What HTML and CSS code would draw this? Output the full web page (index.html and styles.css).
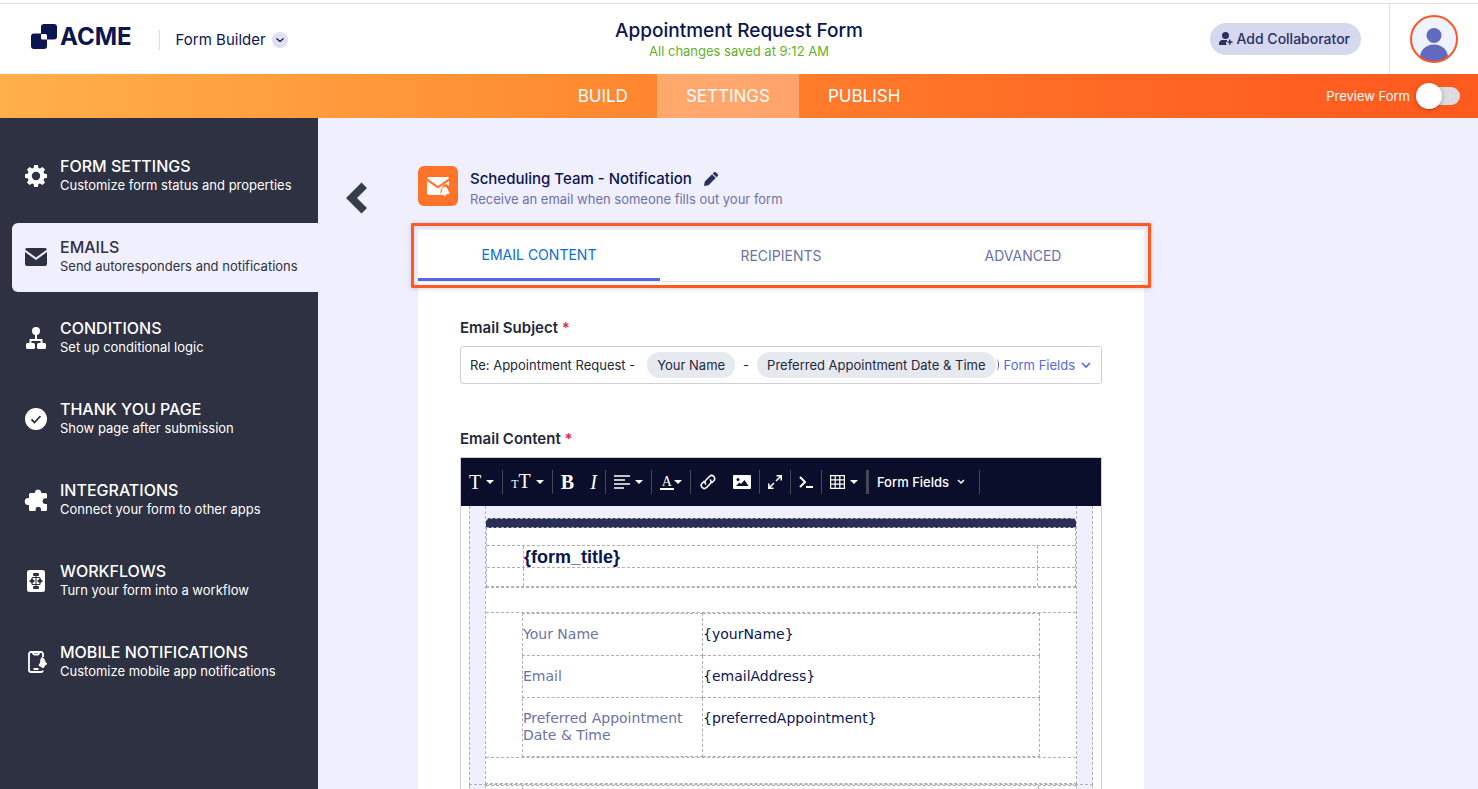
FILE: index.html
```html
<!DOCTYPE html>
<html lang="en">
<head>
    <meta charset="UTF-8">
    <meta name="viewport" content="width=device-width, initial-scale=1.0">
    <title>Appointment Request Form</title>
    <link rel="stylesheet" href="styles.css">
</head>
<body>
    <header class="top-bar">
        <div class="brand">
            <a href="#" class="logo">
                <svg width="26" height="26" viewBox="0 0 26 26"><path fill="#0a1551" d="M13 0h10a3 3 0 0 1 3 3v9.500a3 3 0 0 1-3 3h-7V11.500a1.500 1.500 0 0 0-1.500-1.500H10V3a3 3 0 0 1 3-3zM3 9.500h7V14a1.500 1.500 0 0 0 1.500 1.500H16V22a3 3 0 0 1-3 3H3a3 3 0 0 1-3-3v-9.500a3 3 0 0 1 3-3z"/></svg>
                <span>ACME</span>
            </a>
            <button class="product-button">
                Form Builder
                <svg width="16" height="16" viewBox="0 0 16 16"><circle cx="8" cy="8" r="8" fill="#e0e0f3"/><path d="M4.500 6.500L8 9.500l3.500-3" fill="none" stroke="#0a1551" stroke-width="1.300"/></svg>
            </button>
        </div>
        <div class="form-title">
            <h1>Appointment Request Form</h1>
            <p>All changes saved at 9:12 AM</p>
        </div>
        <div class="account">
            <button class="collaborator-button">
                <svg width="14" height="14" viewBox="0 0 14 14" fill="#2b3063"><circle cx="6.500" cy="3.500" r="3.500"/><path d="M0 13v-1.500C0 9.500 1.500 8 3.500 8H8v2H7v2.500h1V13zM10 7.500h1.500v1.800h2v1.500h-2v1.900H10v-1.900H8.500V9.300H10z"/></svg>
                Add Collaborator
            </button>
            <a href="#" class="profile" aria-label="Account">
                <svg width="48" height="48" viewBox="0 0 48 48"><defs><clipPath id="avatar"><circle cx="24" cy="24" r="23"/></clipPath></defs><circle cx="24" cy="24" r="23" fill="#edf3ff"/><g clip-path="url(#avatar)" fill="#6169c1"><circle cx="24" cy="20.500" r="7.500"/><path d="M10 48v-5c0-8 6-13.500 14-13.500S38 35 38 43v5z"/></g><circle cx="24" cy="24" r="23" fill="none" stroke="#ff5722" stroke-width="2"/></svg>
            </a>
        </div>
    </header>

    <nav class="main-nav">
        <div class="nav-links">
            <a href="#">BUILD</a>
            <a href="#" class="active">SETTINGS</a>
            <a href="#">PUBLISH</a>
        </div>
        <label class="preview">
            Preview Form
            <input type="checkbox" class="switch">
        </label>
    </nav>

    <div class="layout">
        <aside class="sidebar">
            <a href="#" class="menu-item">
                <svg width="24" height="24" viewBox="0 0 24 24"><path fill="currentColor" fill-rule="evenodd" d="M10.200 1h3.600l.6 2.900 1.500.6L18.400 3l2.600 2.600-1.500 2.500.6 1.500 2.900.6v3.600l-2.900.6-.6 1.500 1.500 2.500-2.600 2.600-2.500-1.500-1.500.6-.6 2.900h-3.600l-.6-2.900-1.500-.6L5.600 21 3 18.400l1.500-2.500-.6-1.500-2.900-.6v-3.600l2.900-.6.6-1.500L3 5.600 5.600 3l2.500 1.500 1.500-.6zM12 7.800a4.200 4.200 0 1 0 0 8.400 4.200 4.200 0 0 0 0-8.400z"/></svg>
                <span><strong>FORM SETTINGS</strong><small>Customize form status and properties</small></span>
            </a>
            <a href="#" class="menu-item active">
                <svg width="24" height="24" viewBox="0 0 24 24" fill="currentColor"><path d="M3 3h18a2 2 0 0 1 2 1.500L12 12.500 1 4.500A2 2 0 0 1 3 3z"/><path d="M1 7l11 8 11-8v12a2 2 0 0 1-2 2H3a2 2 0 0 1-2-2z"/></svg>
                <span><strong>EMAILS</strong><small>Send autoresponders and notifications</small></span>
            </a>
            <a href="#" class="menu-item">
                <svg width="24" height="24" viewBox="0 0 24 24"><circle cx="12" cy="5" r="4" fill="currentColor"/><path d="M12 7v7M6.500 18v-4h11v4" fill="none" stroke="currentColor" stroke-width="2"/><rect x="2" y="17" width="9" height="6" rx="1.500" fill="currentColor"/><rect x="13" y="17" width="9" height="6" rx="1.500" fill="currentColor"/></svg>
                <span><strong>CONDITIONS</strong><small>Set up conditional logic</small></span>
            </a>
            <a href="#" class="menu-item">
                <svg width="24" height="24" viewBox="0 0 24 24"><circle cx="12" cy="12" r="11" fill="currentColor"/><path d="M7.500 12.500l3 3 6-6.500" fill="none" stroke="#2e3141" stroke-width="1.800"/></svg>
                <span><strong>THANK YOU PAGE</strong><small>Show page after submission</small></span>
            </a>
            <a href="#" class="menu-item">
                <svg width="24" height="24" viewBox="0 0 24 24"><path fill="currentColor" d="M5 6.500A1.500 1.500 0 0 1 6.500 5h4.200V4.200a3.400 3.400 0 0 1 6.600 0V5h4.200A1.500 1.500 0 0 1 23 6.500v3.700h-1.500a2.900 2.900 0 0 0 0 5.800H23v5.500a1.500 1.500 0 0 1-1.500 1.500H17v-1.500a2.700 2.700 0 0 0-5.400 0V23H6.500A1.500 1.500 0 0 1 5 21.500V17h-.8a3.500 3.500 0 0 1 0-7H5z"/></svg>
                <span><strong>INTEGRATIONS</strong><small>Connect your form to other apps</small></span>
            </a>
            <a href="#" class="menu-item">
                <svg width="24" height="24" viewBox="0 0 24 24"><rect x="3" y="1" width="18" height="22" rx="2.500" fill="currentColor"/><g fill="#2e3141"><rect x="9" y="4" width="6" height="3" rx="1"/><rect x="9" y="17" width="6" height="3" rx="1"/><path d="M5 12l3-2.500 3 2.500-3 2.500zM13 12l3-2.500 3 2.500-3 2.500z"/></g><path d="M12 7v10M8 10V8.500h8V10M8 14v1.500h8V14" fill="none" stroke="#2e3141"/></svg>
                <span><strong>WORKFLOWS</strong><small>Turn your form into a workflow</small></span>
            </a>
            <a href="#" class="menu-item">
                <svg width="24" height="24" viewBox="0 0 24 24"><path d="M19 7V4a2 2 0 0 0-2-2H7a2 2 0 0 0-2 2v16a2 2 0 0 0 2 2h10a2 2 0 0 0 2-1.500M9 2.500c0 1.500.5 2 1.500 2h3c1 0 1.500-.5 1.500-2M9.500 19h5" fill="none" stroke="currentColor" stroke-width="1.800"/><path fill="currentColor" d="M18 7c2.500 1 3 3 3.300 4.500l1.700 2c0 1-.7 1.500-1.500 1.500L20 17.500c-1 1-2.500.5-2.500-.5l-2-.7c-1-.4-1-1.300-.5-2l1-1.300c.3-2 0-4.500 2-6z"/></svg>
                <span><strong>MOBILE NOTIFICATIONS</strong><small>Customize mobile app notifications</small></span>
            </a>
        </aside>

        <main class="content">
            <button class="back-button" aria-label="Back">
                <svg width="22" height="32" viewBox="0 0 22 32"><path d="M0 16L15.500.5 21 6l-10 10 10 10-5.500 5.500z" fill="#373e49"/></svg>
            </button>
            <div class="email-settings">
                <div class="email-header">
                    <svg width="40" height="40" viewBox="0 0 40 40"><rect width="40" height="40" rx="6" fill="#ff7429"/><path fill="#fff" d="M11 11h18a2 2 0 0 1 2 1.300L20 20 9 12.300A2 2 0 0 1 11 11zM9 15l11 7.500L31 15v5c-2-2.500-5-2.500-6.500.5L22.500 25v4H11a2 2 0 0 1-2-2z"/><path fill="#fff" d="M26.500 21c2.500 0 3.200 1.800 3.400 3.500l1.600 2c0 1-.5 1.500-1.300 1.500L28 28.500c-.3 2-2.200 2.200-2.500.5H23.500c-.8 0-1.200-.8-1-1.500l1.300-1.500c0-2.500.7-5 2.700-5z"/></svg>
                    <div class="email-name">
                        <h2>Scheduling Team - Notification
                            <button class="rename-button" aria-label="Rename"><svg width="14" height="14" viewBox="0 0 14 14" fill="#2b3063"><path d="M0 14l.8-4.500 7.200-7.200 3.700 3.700-7.200 7.200zM8.700 1.600L9.800.5a1.500 1.500 0 0 1 2.200 0l1.500 1.500a1.500 1.500 0 0 1 0 2.200l-1.100 1.100z"/></svg></button>
                        </h2>
                        <p>Receive an email when someone fills out your form</p>
                    </div>
                </div>

                <div class="panel">
                    <div class="tabs">
                        <button class="tab active">EMAIL CONTENT</button>
                        <button class="tab">RECIPIENTS</button>
                        <button class="tab">ADVANCED</button>
                        <div class="tabs-outline"></div>
                    </div>

                    <div class="panel-body">
                        <label class="field-label" for="subject">Email Subject <em>*</em></label>
                        <div class="subject-box">
                            <input type="text" id="subject" value="Re: Appointment Request -">
                            <span class="chip">Your Name</span>
                            <span>-</span>
                            <span class="chip">Preferred Appointment Date &amp; Time</span>
                            <button class="subject-fields">
                                Form Fields
                                <svg width="10" height="8" viewBox="0 0 10 8"><path d="M1 2l4 4 4-4" fill="none" stroke="currentColor" stroke-width="1.600"/></svg>
                            </button>
                        </div>

                        <div class="field-label" id="content-label">Email Content <em>*</em></div>
                        <div class="editor">
                            <div class="toolbar">
                                <div class="tool-group">
                                    <button aria-label="Font"><span class="glyph">T</span><i class="caret"></i></button>
                                </div>
                                <div class="tool-group">
                                    <button aria-label="Font size"><span class="glyph"><small>T</small>T</span><i class="caret"></i></button>
                                </div>
                                <div class="tool-group">
                                    <button aria-label="Bold"><b class="glyph">B</b></button>
                                    <button aria-label="Italic"><i class="glyph">I</i></button>
                                </div>
                                <div class="tool-group">
                                    <button aria-label="Align"><svg width="16" height="14" viewBox="0 0 16 14"><path d="M0 1h16M0 5h11M0 9h16M0 13h10" stroke="#fff" stroke-width="1.600"/></svg><i class="caret"></i></button>
                                </div>
                                <div class="tool-group tight">
                                    <button aria-label="Text color"><span class="glyph color">A</span><i class="caret"></i></button>
                                </div>
                                <div class="tool-group">
                                    <button aria-label="Link"><svg width="18" height="18" viewBox="0 0 18 18" fill="none" stroke="#fff" stroke-width="1.600"><path d="M7 11.500a3 3 0 0 1 0-4.500L10.500 3.500a3 3 0 0 1 4.300 4.300L12.500 10M11 6.500a3 3 0 0 1 0 4.500L7.500 14.500a3 3 0 0 1-4.300-4.300L5.500 8"/></svg></button>
                                    <button aria-label="Image"><svg width="18" height="14" viewBox="0 0 18 14"><rect width="18" height="14" rx="1" fill="#fff"/><circle cx="5" cy="4.500" r="1.500" fill="#0a0e2b"/><path d="M3 11l3.500-3.500L8 9l3.500-4L15.500 11z" fill="#0a0e2b"/></svg></button>
                                </div>
                                <div class="tool-group">
                                    <button aria-label="Full screen"><svg width="14" height="14" viewBox="0 0 14 14" fill="none" stroke="#fff" stroke-width="1.500"><path d="M8 6l5-5M8.500.8h4.700v4.700M6 8l-5 5M.8 8.500v4.700h4.700"/></svg></button>
                                </div>
                                <div class="tool-group">
                                    <button aria-label="Source"><svg width="14" height="14" viewBox="0 0 14 14" fill="none" stroke="#fff" stroke-width="2"><path d="M1 2l5 5-5 5M7 12h7"/></svg></button>
                                </div>
                                <div class="tool-group wide-line">
                                    <button aria-label="Table"><svg width="15" height="14" viewBox="0 0 15 14" fill="none" stroke="#fff" stroke-width="1.200"><path d="M.6.600h13.800v12.800H.6zM5.200.600v12.800M9.800.600v12.800M.6 4.900h13.800M.6 9.100h13.800"/></svg><i class="caret"></i></button>
                                </div>
                                <div class="tool-group last">
                                    <button class="toolbar-fields">Form Fields <svg width="8" height="6" viewBox="0 0 8 6"><path d="M1 1l3 3 3-3" fill="none" stroke="#fff" stroke-width="1.500"/></svg></button>
                                </div>
                            </div>
                            <div class="editor-body">
                                <div class="mail">
                                    <div class="mail-card">
                                        <div class="mail-top"></div>
                                        <div class="mail-bar"></div>
                                        <div class="mail-heading">
                                            <div class="mail-space"></div>
                                            <div class="mail-row"><div></div><h3>{form_title}</h3><div></div></div>
                                            <div class="mail-row low"><div></div><div></div><div></div></div>
                                        </div>
                                        <div class="mail-gap"></div>
                                        <div class="mail-fields">
                                            <table>
                                                <tr><th>Your Name</th><td>{yourName}</td></tr>
                                                <tr><th>Email</th><td>{emailAddress}</td></tr>
                                                <tr><th>Preferred Appointment Date &amp; Time</th><td>{preferredAppointment}</td></tr>
                                            </table>
                                        </div>
                                        <div class="mail-gap"></div>
                                    </div>
                                </div>
                                <div class="mail mail-end">
                                    <div class="mail-card">
                                        <div class="mail-row low"><div></div><div></div><div></div></div>
                                    </div>
                                </div>
                            </div>
                        </div>
                    </div>
                </div>
            </div>
        </main>
    </div>
</body>
</html>
```
FILE: styles.css
```css
* {
    box-sizing: border-box;
}

body {
    display: flex;
    flex-direction: column;
    height: 100vh;
    margin: 0;
    padding-top: 3px;
    overflow: hidden;
    font-family: 'Inter', sans-serif;
    font-size: 14px;
    line-height: 20px;
    color: #0a1551;
    background-color: #fff;
}

h1, h2, h3, p {
    margin: 0;
}

a {
    color: inherit;
    text-decoration: none;
}

button {
    display: flex;
    align-items: center;
    padding: 0;
    border: none;
    background: none;
    color: inherit;
    font: inherit;
    cursor: pointer;
}

svg {
    display: block;
    flex-shrink: 0;
}

/* Header */
.top-bar {
    display: grid;
    grid-template-columns: 1fr auto 1fr;
    align-items: center;
    flex-shrink: 0;
    height: 71px;
    border-top: 1px solid #dcdce0;
}

.brand {
    display: flex;
    align-items: center;
    padding: 2px 0 0 31px;
}

.logo {
    display: flex;
    align-items: center;
    gap: 3px;
    padding-bottom: 6px;
    font-size: 24px;
    font-weight: 700;
}

.product-button {
    gap: 6px;
    margin-left: 27px;
    padding-left: 16px;
    border-left: 1px solid #dadbeb;
    font-size: 15px;
}

.form-title {
    padding-top: 2px;
    text-align: center;
}

.form-title h1 {
    font-size: 19px;
    font-weight: 500;
    line-height: 22px;
}

.form-title p {
    color: #64b128;
    font-size: 13px;
    line-height: 18px;
}

.account {
    display: flex;
    align-items: center;
    justify-content: flex-end;
    gap: 28px;
}

.collaborator-button {
    gap: 4px;
    height: 32px;
    padding: 0 11px 0 9px;
    border-radius: 16px;
    background-color: #d5d8ef;
    color: #2b3063;
    font-weight: 500;
}

.profile {
    display: flex;
    align-items: center;
    height: 70px;
    padding: 0 20px;
    border-left: 1px solid #e0e0e5;
}

/* Orange navigation */
.main-nav {
    display: grid;
    grid-template-columns: 1fr auto 1fr;
    flex-shrink: 0;
    height: 44px;
    background: linear-gradient(90deg, #ffb04a, #ff8a30 40%, #ff6423 80%, #ff5a1e);
    color: #fff;
}

.nav-links {
    display: flex;
    grid-column: 2;
    font-size: 17px;
}

.nav-links a {
    padding: 12px 29px;
}

.nav-links a.active {
    background-color: rgba(255, 255, 255, 0.3);
}

.preview {
    display: flex;
    align-items: center;
    justify-content: flex-end;
    gap: 12px;
    padding-right: 18px;
    font-size: 13px;
}

.switch {
    position: relative;
    width: 38px;
    height: 18px;
    margin: 0;
    border-radius: 9px;
    background-color: #dadce2;
    appearance: none;
}

.switch::before {
    content: "";
    position: absolute;
    top: -4px;
    left: -6px;
    width: 26px;
    height: 26px;
    border-radius: 50%;
    background-color: #fff;
    box-shadow: 0 1px 4px rgba(0, 0, 0, 0.3);
}

.layout {
    display: flex;
    flex: 1;
    min-height: 0;
    background-color: #f0effd;
}

/* Sidebar */
.sidebar {
    display: flex;
    flex-direction: column;
    flex-shrink: 0;
    gap: 12px;
    width: 318px;
    padding: 24px 0 0 12px;
    background-color: #2e3141;
    color: #fff;
}

.menu-item {
    display: flex;
    align-items: center;
    gap: 12px;
    height: 69px;
    padding: 0 0 2px 12px;
    border-radius: 6px 0 0 6px;
}

.menu-item.active {
    background-color: #f0effd;
    color: #2e3141;
}

.menu-item strong,
.menu-item small {
    display: block;
    font-size: 16px;
    font-weight: 500;
}

.menu-item small {
    font-size: 13px;
    font-weight: 400;
    line-height: 19px;
}

/* Content */
.content {
    display: flex;
    align-items: flex-start;
    flex: 1;
    gap: 50px;
    padding: 48px 28px 0;
    overflow: hidden;
}

.back-button {
    padding-top: 16px;
}

.email-settings {
    flex: 1;
    max-width: 726px;
}

.email-header {
    display: flex;
    gap: 12px;
    margin-bottom: 24px;
    height: 40px;
}

.email-name {
    padding-top: 3px;
    color: #6c73a8;
}

.email-name h2 {
    display: flex;
    align-items: center;
    gap: 12px;
    color: #0a1551;
    font-size: 15px;
    font-weight: 500;
}

.email-name p {
    font-size: 13px;
}

.panel {
    background-color: #fff;
}

.tabs {
    position: relative;
    display: flex;
    height: 52px;
    border-bottom: 1px solid #e6e6ea;
}

.tab {
    flex: 1;
    justify-content: center;
    height: 51px;
    padding-top: 1px;
    color: #6c73a8;
}

.tab.active {
    border-bottom: 3px solid #5468e0;
    color: #0a6cd8;
}

.tabs-outline {
    position: absolute;
    inset: -7px;
    border: 3px solid #ff5a1f;
    border-radius: 1px;
    box-shadow: 0 1px 4px rgba(60, 40, 90, 0.2), inset 0 1px 4px rgba(60, 40, 90, 0.15);
    pointer-events: none;
}

.panel-body {
    padding: 36px 42px;
}

.field-label {
    display: block;
    margin-bottom: 9px;
    color: #23283a;
    font-size: 15px;
    font-weight: 600;
    line-height: 19px;
}

.field-label em {
    color: #dc2e45;
    font-style: normal;
}

.subject-box {
    display: flex;
    align-items: center;
    gap: 8px;
    height: 38px;
    margin-bottom: 45px;
    padding: 0 10px 0 9px;
    border: 1px solid #cfcfe2;
    border-radius: 3px;
    color: #23283a;
    font-size: 13px;
    white-space: nowrap;
}

.subject-box input {
    flex: 1;
    min-width: 0;
    padding: 0;
    border: none;
    outline: none;
    color: inherit;
    font: inherit;
}

.chip {
    padding: 3px 10px;
    border-radius: 13px;
    background-color: #e7e9f1;
}

.subject-fields {
    position: relative;
    gap: 6px;
    color: #5468e0;
}

.subject-fields::before {
    content: "";
    position: absolute;
    left: -10px;
    width: 4px;
    height: 12px;
    border-right: 1px solid #5468e0;
    border-radius: 50%;
}

/* Editor */
.editor {
    border: 1px solid #cfcfe2;
}

.toolbar {
    display: flex;
    align-items: center;
    height: 48px;
    background-color: #0a0e2b;
    color: #fff;
}

.tool-group {
    display: flex;
    align-items: center;
    gap: 16px;
    height: 24px;
    padding: 0 8px;
    border-right: 1px solid #454857;
}

.tool-group button {
    gap: 5px;
}

.tool-group.tight button {
    gap: 0;
}

.tool-group.wide-line {
    border-right-width: 3px;
}

.tool-group.last {
    padding-right: 14px;
}

.glyph {
    font-family: 'Liberation Serif', serif;
    font-size: 20px;
}

.glyph small {
    font-size: 12px;
}

.glyph.color {
    border-bottom: 2px solid #fff;
    padding: 0 2px;
    font-size: 14px;
    line-height: 13px;
}

.caret {
    border: 4px solid transparent;
    border-top-color: #fff;
    border-bottom: none;
}

.toolbar .toolbar-fields {
    gap: 8px;
    font-size: 13px;
    font-weight: 500;
}

.editor-body {
    padding: 0 8px;
}

/* Email template, dashed lines mark the layout cells */
.mail {
    padding: 0 15px;
    border: 1px dashed #b0b0b0;
    border-top: none;
    background-color: #f0effd;
}

.mail-card {
    border: 1px dashed #b0b0b0;
    border-top: none;
    background-color: #fff;
}

.mail-top {
    height: 12px;
    background-color: #f0effd;
}

.mail-bar {
    height: 10px;
    border: 1px dashed #b0b0b0;
    border-width: 1px 0;
    border-radius: 4px 4px 0 0;
    background-color: #2a2f58;
}

.mail-heading {
    border: 1px dashed #b0b0b0;
    border-top: none;
}

.mail-heading + .mail-gap {
    border-top: 1px dashed #b0b0b0;
}

.mail-space {
    height: 17px;
}

.mail-row {
    display: grid;
    grid-template-columns: 36px 1fr 37px;
    height: 22px;
    border-top: 1px dashed #b0b0b0;
}

.mail-row.low {
    height: 19px;
}

.mail-row > :nth-child(2) {
    border: 1px dashed #b0b0b0;
    border-width: 0 1px;
}

.mail-row h3 {
    font-family: 'Liberation Sans', sans-serif;
    font-size: 18px;
    line-height: 22px;
}

.mail-gap {
    height: 25px;
}

.mail-fields {
    padding: 0 36px;
    border: 1px dashed #b0b0b0;
    border-width: 1px 0;
}

.mail-fields table {
    width: 100%;
    border-collapse: collapse;
    font-family: 'DejaVu Sans', sans-serif;
    line-height: 17px;
}

.mail-fields th,
.mail-fields td {
    padding: 12px 0;
    border: 1px dashed #b0b0b0;
    font-weight: 400;
    text-align: left;
    vertical-align: top;
}

.mail-fields th {
    width: 180px;
    padding-right: 12px;
    color: #6c73a8;
}

.mail-end {
    height: 60px;
}
```
